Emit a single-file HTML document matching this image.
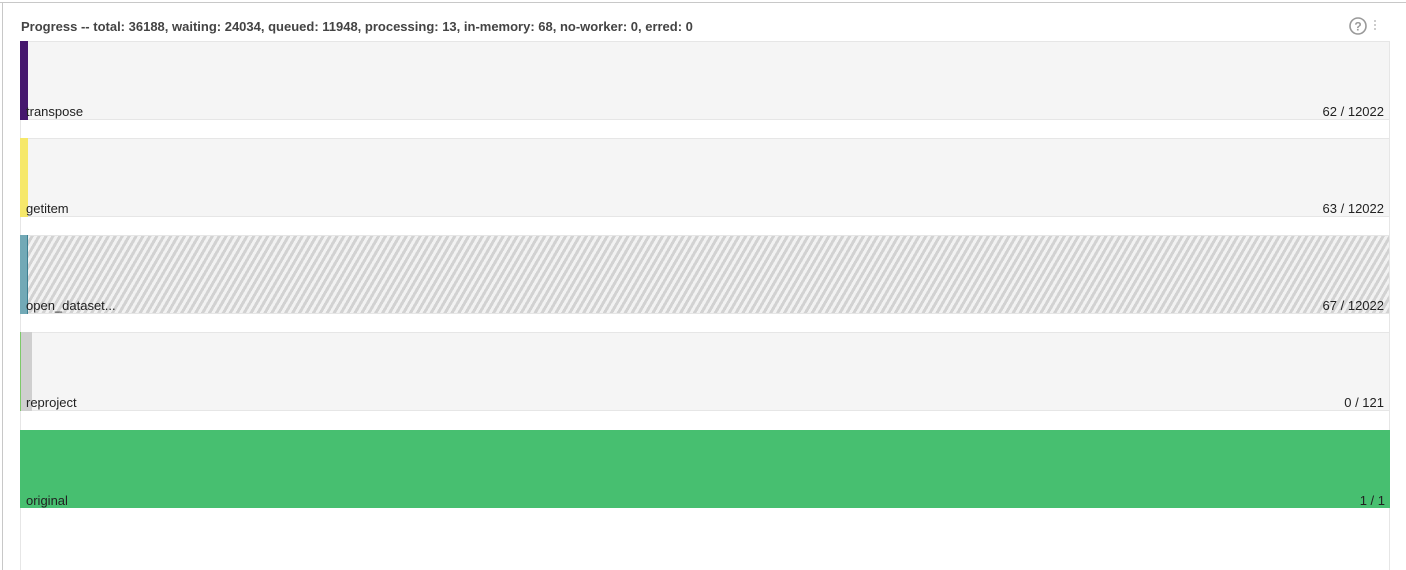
<!DOCTYPE html>
<html><head><style>
html,body{margin:0;width:1406px;height:570px;overflow:hidden;background:#fff;font-family:"Liberation Sans",sans-serif;position:relative}
.top{position:absolute;left:0;top:2px;width:1406px;height:1px;background:#c8c8c8}
.lft{position:absolute;left:2px;top:2px;width:1px;height:568px;background:#c8c8c8}
.panel{position:absolute;left:20px;top:41px;width:1368px;height:529px;border-left:1px solid #e6e6e6;border-right:1px solid #e6e6e6}
.title{position:absolute;left:21px;top:19px;font-size:13px;font-weight:bold;color:#444}
.row{position:absolute;left:20px;width:1370px;height:79px;background:#f5f5f5;border:1px solid #e6e6e6;border-left:none;box-sizing:border-box}
.bar{position:absolute;left:0;top:-1px;height:79px}
.lab{position:absolute;left:6px;top:62px;font-size:13px;color:#222}
.cnt{position:absolute;right:5px;top:62px;font-size:13px;color:#222}
</style></head><body>
<div class="top"></div><div class="lft"></div>
<div class="panel"></div>
<div class="title">Progress -- total: 36188, waiting: 24034, queued: 11948, processing: 13, in-memory: 68, no-worker: 0, erred: 0</div>
<svg style="position:absolute;left:1348px;top:16px" width="32" height="22">
<circle cx="10" cy="10" r="8" fill="none" stroke="#999" stroke-width="1.6"/>
<text x="10" y="14.5" text-anchor="middle" font-family="Liberation Sans" font-weight="bold" font-size="12" fill="#999">?</text>
<circle cx="27" cy="5" r="0.9" fill="#aaa"/><circle cx="27" cy="9" r="0.9" fill="#aaa"/><circle cx="27" cy="13" r="0.9" fill="#aaa"/>
</svg>
<div class="row" style="top:41px"><div class="bar" style="width:8px;background:#46186e"></div><div class="lab">transpose</div><div class="cnt">62 / 12022</div></div>
<div class="row" style="top:138px"><div class="bar" style="width:8px;background:#f6e86a"></div><div class="lab">getitem</div><div class="cnt">63 / 12022</div></div>
<div class="row" style="top:235px;background:repeating-linear-gradient(-60deg,#d2d2d2 0 3px,#f2f2f2 3px 6px)"><div class="bar" style="width:8px;background:#72a9b6;border-right:1px solid #3d7f91;box-sizing:border-box"></div><div class="lab">open_dataset...</div><div class="cnt">67 / 12022</div></div>
<div class="row" style="top:332px"><div class="bar" style="width:12px;background:#cfcfcf;border-left:1px solid #7dc96a;box-sizing:border-box"></div><div class="lab">reproject</div><div class="cnt">0 / 121</div></div>
<div class="row" style="top:430px;background:#47bf70;border:none;height:78px"><div class="lab" style="top:63px">original</div><div class="cnt" style="top:63px">1 / 1</div></div>
</body></html>
